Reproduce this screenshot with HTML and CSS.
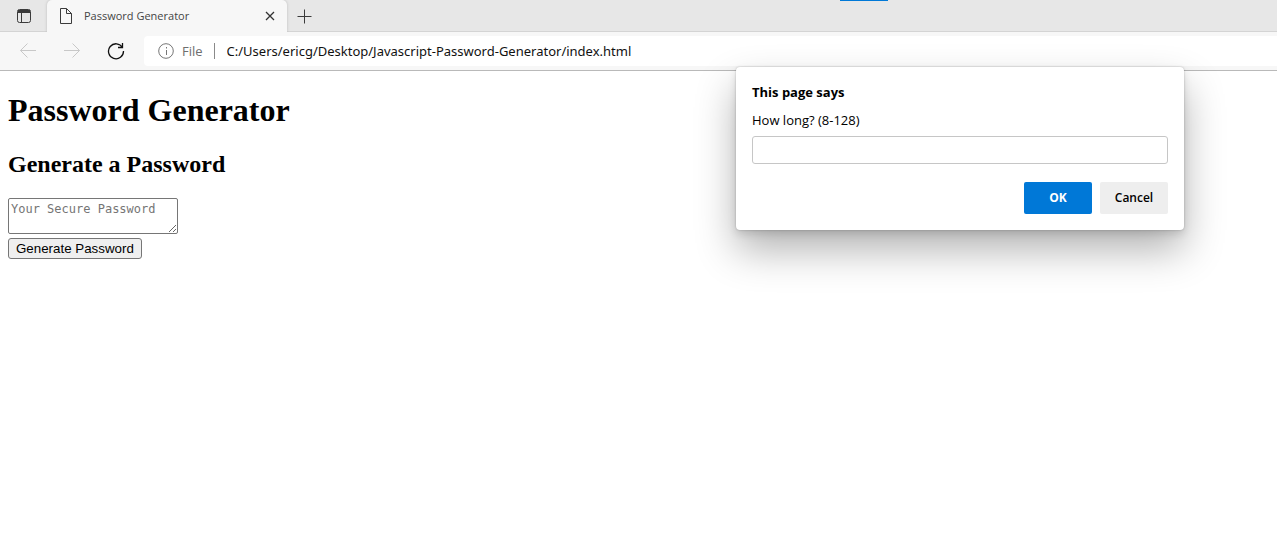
FILE: index.html
```html
<!DOCTYPE html>
<html lang="en">
<head>
<meta charset="utf-8">
<title>Password Generator</title>
<link rel="stylesheet" href="styles.css">
</head>
<body>
<header class="browser">
  <div class="tab-strip">
    <button class="tab-actions" aria-label="Tab actions">
      <svg width="16" height="16" viewBox="0 0 16 16" fill="none" stroke="#3b3b3b"><rect x="1.5" y="1.5" width="13" height="13" rx="2"/><path d="M2 2h12v3H2z" fill="#3b3b3b" stroke="none"/><path d="M5.500 5v9"/></svg>
    </button>
    <div class="tab">
      <svg width="16" height="16" viewBox="0 0 16 16" fill="none" stroke="#3b3b3b"><path d="M2.500 .5h6l5 5v10h-11zM8.500 .5v5h5"/></svg>
      <span class="tab-title">Password Generator</span>
      <button class="tab-close" aria-label="Close tab">
        <svg width="10" height="10" viewBox="0 0 10 10" fill="none" stroke="#333" stroke-width="1.300"><path d="M1 1l8 8M9 1L1 9"/></svg>
      </button>
    </div>
    <button class="new-tab" aria-label="New tab">
      <svg width="15" height="15" viewBox="0 0 15 15" fill="none" stroke="#3b3b3b"><path d="M7.500 .5v14M.5 7.500h14"/></svg>
    </button>
    <span class="drag-mark"></span>
  </div>
  <div class="toolbar">
    <button class="nav" aria-label="Back" disabled>
      <svg width="16" height="16" viewBox="0 0 16 16" fill="none" stroke="#c8c8c8"><path d="M16 7.500H.5M7.500 .5l-7 7 7 7"/></svg>
    </button>
    <button class="nav" aria-label="Forward" disabled>
      <svg width="16" height="16" viewBox="0 0 16 16" fill="none" stroke="#c8c8c8"><path d="M0 7.500h15.500M8.500 .5l7 7-7 7"/></svg>
    </button>
    <button class="nav" aria-label="Refresh">
      <svg width="18" height="18" viewBox="0 0 18 18" fill="none" stroke="#111" stroke-width="1.300"><path d="M15.500 5.500A7.500 7.500 0 1 0 16.500 9M15.500 1v4.500H11"/></svg>
    </button>
    <div class="address">
      <svg width="16" height="16" viewBox="0 0 16 16" fill="none" stroke="#767676"><circle cx="8" cy="8" r="7.300"/><path d="M8.500 7v5M8.500 4v1.500"/></svg>
      <label class="scheme" for="url">File</label>
      <span class="divider"></span>
      <input class="url" id="url" type="text" value="C:/Users/ericg/Desktop/Javascript-Password-Generator/index.html">
    </div>
  </div>
</header>
<main class="page">
  <h1>Password Generator</h1>
  <h2>Generate a Password</h2>
  <textarea class="password" placeholder="Your Secure Password" aria-label="Your Secure Password"></textarea>
  <button class="generate">Generate Password</button>
</main>
<form class="dialog" role="dialog" aria-labelledby="dialog-title">
  <strong class="dialog-title" id="dialog-title">This page says</strong>
  <label class="question" for="length">How long? (8-128)</label>
  <input class="answer" id="length" type="text">
  <div class="actions">
    <button class="action primary" type="button">OK</button>
    <button class="action" type="button">Cancel</button>
  </div>
</form>
</body>
</html>
```
FILE: styles.css
```css
* { box-sizing: border-box; }
body { margin: 0; background: #fff; color: #000; font-family: "Liberation Serif", serif; }
button, input, textarea { margin: 0; }
svg { display: block; flex: none; }

.browser { font-family: "Open Sans", sans-serif; }
.browser button { display: flex; align-items: center; justify-content: center; padding: 0; border: 0; background: none; }
.tab-strip { position: relative; display: flex; height: 32px; background: #e7e7e7; box-shadow: inset 0 -1px #d4d4d4; }
.tab-actions { width: 47px; }
.tab { display: flex; align-items: center; width: 240px; padding: 0 11px; background: #f7f7f7; border-radius: 5px 5px 0 0; box-shadow: 0 0 3px #bbb; clip-path: inset(0 -4px); }
.tab-title { flex: 1; margin-left: 10px; font-size: 11px; line-height: 16px; color: #454545; }
.tab .tab-close { width: 12px; height: 16px; }
.new-tab { width: 35px; }
.drag-mark { position: absolute; top: 0; left: 840px; width: 48px; height: 1px; background: #0078d7; }

.toolbar { display: flex; align-items: center; height: 39px; padding-left: 6px; background: #f7f7f7; border-bottom: 1px solid #b9b9b9; }
.nav { width: 44px; height: 30px; }
.address { display: flex; align-items: center; flex: 1; height: 30px; margin-left: 6px; padding-left: 14px; background: #fff; border-radius: 4px 0 0 4px; }
.scheme { margin-left: 8px; font-size: 13px; line-height: 18px; color: #6e6e6e; }
.divider { width: 1px; height: 16px; margin: 0 12px 0 11px; background: #8a8a8a; }
.url { flex: 1; min-width: 0; padding: 0; border: 0; outline: 0; background: none; font: 13px/18px "Noto Sans", sans-serif; color: #111; }

.page { display: flex; flex-direction: column; align-items: flex-start; padding: 21px 8px 8px; }
.page h1 { margin: 0 0 22px; font-size: 32px; line-height: 37px; }
.page h2 { margin: 0 0 20px; font-size: 24px; line-height: 27px; }
.password { width: 170px; height: 36px; padding: 3px 2px 2px; border: 1px solid #767676; border-radius: 2px; font: 12px/15px "DejaVu Sans Mono", monospace; }
.password::placeholder { color: #757575; }
.generate { height: 21px; margin-top: 4px; padding: 0 7px; border: 1px solid #767676; border-radius: 3px; background: #efefef; color: #000; font-family: "Liberation Sans", sans-serif; }

.dialog { position: absolute; top: 67px; left: 736px; display: flex; flex-direction: column; width: 448px; padding: 15px 16px 16px; background: #fff; border-radius: 4px; box-shadow: 0 0 2px rgba(0,0,0,.25), 0 4px 8px rgba(0,0,0,.12), 0 20px 40px rgba(0,0,0,.3); font-family: "Open Sans", sans-serif; }
.dialog-title { font-size: 13px; line-height: 20px; }
.question { margin-top: 8px; font-size: 13px; line-height: 20px; }
.answer { width: 100%; height: 28px; margin-top: 6px; padding: 0 8px; border: 1px solid #c6c6c6; border-radius: 3px; background: #fff; font: 13px/18px "Open Sans", sans-serif; }
.actions { display: flex; justify-content: flex-end; gap: 8px; margin-top: 18px; }
.action { width: 68px; height: 32px; padding: 0; border: 0; border-radius: 2px; background: #eee; color: #000; font: 600 12px/16px "Open Sans", sans-serif; }
.primary { background: #0078d7; color: #fff; font-weight: 700; }
```
